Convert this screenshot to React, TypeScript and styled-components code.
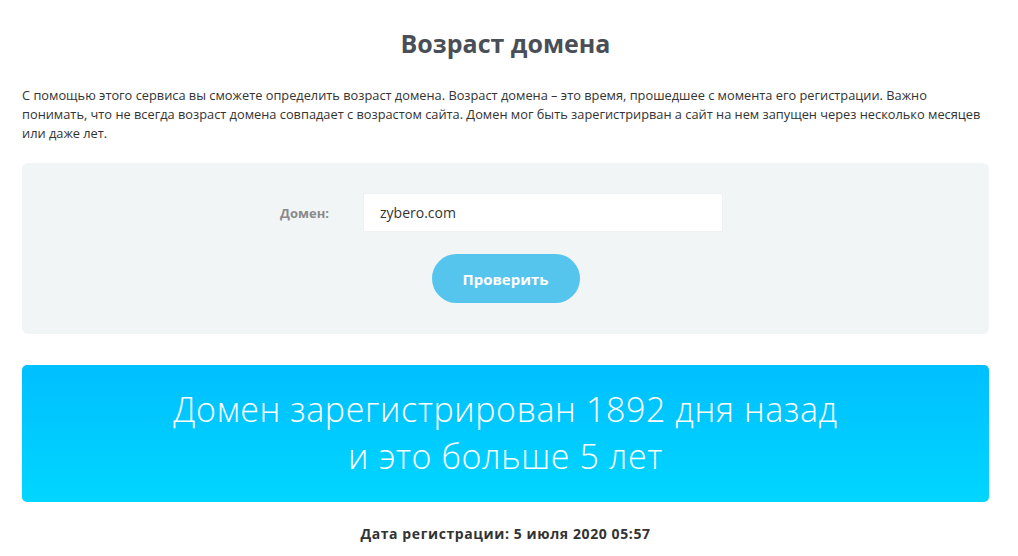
import React from "react";
import styled, { createGlobalStyle } from "styled-components";

const GlobalStyle = createGlobalStyle`
  html, body {
    margin: 0;
    padding: 0;
    background: #ffffff;
  }
  body {
    font-family: "Open Sans", "Liberation Sans", sans-serif;
  }
`;

const Page = styled.div`
  width: 967px;
  margin: 0 0 0 22px;
  padding-top: 27px;
`;

const Title = styled.h1`
  margin: 0;
  text-align: center;
  font-family: "Open Sans", sans-serif;
  font-size: 25px;
  font-weight: 700;
  color: #4a4f57;
  line-height: 32px;
`;

const Intro = styled.p`
  margin: 27px 0 0;
  font-family: "Open Sans", sans-serif;
  font-size: 12.8px;
  line-height: 19px;
  color: #333;
`;

const FormPanel = styled.div`
  margin-top: 20px;
  background: #f2f5f6;
  border-radius: 6px;
  padding: 30px 0 31px;
  display: flex;
  flex-direction: column;
  align-items: center;
  gap: 22px;
`;

const FieldRow = styled.div`
  display: flex;
  align-items: center;
  margin-right: 8px;
`;

const Label = styled.label`
  width: 83px;
  font-family: "Open Sans", sans-serif;
  font-size: 13px;
  font-weight: 700;
  color: #8a8a8a;
`;

const Input = styled.input`
  width: 360px;
  height: 39px;
  box-sizing: border-box;
  border: 1px solid #eef0f1;
  background: #fff;
  padding: 0 16px;
  font-family: "Open Sans", sans-serif;
  font-size: 14px;
  color: #333;
  outline: none;
`;

const CheckButton = styled.button`
  width: 148px;
  height: 49px;
  border: none;
  border-radius: 25px;
  background: #55c5ee;
  color: #fff;
  font-family: "Open Sans", sans-serif;
  font-size: 15px;
  font-weight: 700;
  cursor: pointer;
`;

const ResultBox = styled.div`
  margin-top: 31px;
  border-radius: 5px;
  background: linear-gradient(180deg, #00bfff 0%, #00d6ff 100%);
  padding: 21px 0 22px;
  text-align: center;
  color: #fff;
  font-family: "Open Sans", sans-serif;
  font-weight: 300;
  font-size: 34px;
  letter-spacing: 0.6px;
  line-height: 47px;
`;

const RegDate = styled.div`
  margin-top: 22px;
  text-align: center;
  font-family: "Open Sans", sans-serif;
  font-size: 14px;
  letter-spacing: 0.6px;
  font-weight: 700;
  color: #333;
`;

export default function App() {
  return (
    <>
      <GlobalStyle />
      <Page>
        <Title>Возраст домена</Title>
        <Intro>
          С помощью этого сервиса вы сможете определить возраст домена. Возраст
          домена – это время, прошедшее с момента его регистрации. Важно
          понимать, что не всегда возраст домена совпадает с возрастом сайта.
          Домен мог быть зарегистрирван а сайт на нем запущен через несколько
          месяцев или даже лет.
        </Intro>
        <FormPanel>
          <FieldRow>
            <Label htmlFor="domain">Домен:</Label>
            <Input id="domain" defaultValue="zybero.com" />
          </FieldRow>
          <CheckButton>Проверить</CheckButton>
        </FormPanel>
        <ResultBox>
          Домен зарегистрирован 1892 дня назад
          <br />и это больше 5 лет
        </ResultBox>
        <RegDate>Дата регистрации: 5 июля 2020 05:57</RegDate>
      </Page>
    </>
  );
}
